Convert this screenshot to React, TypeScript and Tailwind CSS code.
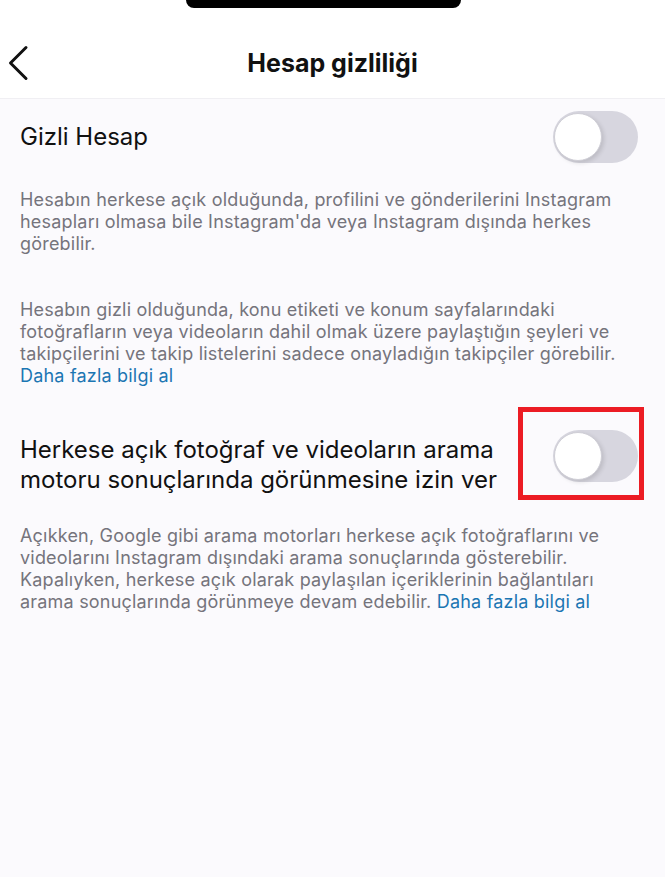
import React, { useState } from "react";

const font = { fontFamily: "Inter, 'Noto Sans', sans-serif" };

interface ToggleProps {
  on: boolean;
  onChange: () => void;
}

const Toggle: React.FC<ToggleProps> = ({ on, onChange }) => (
  <button
    onClick={onChange}
    className={`relative block h-[52px] w-[85px] shrink-0 rounded-full ${on ? "bg-[#34c759]" : "bg-[#d7d6df]"}`}
  >
    <span
      className={`absolute top-[2px] h-[48px] w-[48px] rounded-full border-[1.5px] border-[#cfced6] bg-white shadow-[2px_2px_4px_rgba(0,0,0,0.12)] ${on ? "left-[35px]" : "left-[1px]"}`}
    />
  </button>
);

const Link = () => <span className="text-[#1b76b3]">Daha fazla bilgi al</span>;

const App: React.FC = () => {
  const [isPrivate, setIsPrivate] = useState(false);
  const [searchable, setSearchable] = useState(false);

  return (
    <div className="min-h-[877px] bg-[#fbfafd] text-[#111]" style={font}>
      {/* status bar with the camera cutout */}
      <div className="flex h-[8px] bg-white">
        <div className="ml-[186px] h-[8px] w-[275px] rounded-b-[16px] bg-black" />
      </div>

      <div className="grid h-[91px] grid-cols-[60px_1fr_60px] items-start border-b border-[#f0eff3] bg-white">
        <button className="ml-[6px] mt-[37px]">
          <svg width="24" height="36" viewBox="0 0 24 36" fill="none">
            <path d="M20 2.5 L4.5 18 L20 33.5" stroke="#111" strokeWidth="3" strokeLinecap="round" strokeLinejoin="round" />
          </svg>
        </button>
        <h1 className="mt-[40px] text-center text-[25px] font-bold leading-[30px]">Hesap gizliliği</h1>
        <div />
      </div>

      <div className="pl-5 pr-[27px]">
        <div className="flex items-center justify-between pt-[12px]">
          <span className="text-[24px]">Gizli Hesap</span>
          <Toggle on={isPrivate} onChange={() => setIsPrivate(!isPrivate)} />
        </div>

        <p className="mt-[26px] text-[18px] leading-[22px] tracking-[0.2px] text-[#75747c]">
          Hesabın herkese açık olduğunda, profilini ve gönderilerini Instagram hesapları olmasa bile Instagram'da veya
          Instagram dışında herkes görebilir.
        </p>

        <p className="mt-[44px] text-[18px] leading-[22px] tracking-[0.2px] text-[#75747c]">
          Hesabın gizli olduğunda, konu etiketi ve konum sayfalarındaki fotoğrafların veya videoların dahil olmak üzere
          paylaştığın şeyleri ve takipçilerini ve takip listelerini sadece onayladığın takipçiler görebilir.
          <br />
          <Link />
        </p>

        <div className="mt-[43px] flex items-start justify-between">
          <span className="mt-[5px] text-[24px] leading-[30px]">
            Herkese açık fotoğraf ve videoların arama
            <br />
            motoru sonuçlarında görünmesine izin ver
          </span>
          <div className="relative">
            <Toggle on={searchable} onChange={() => setSearchable(!searchable)} />
            <div className="pointer-events-none absolute bottom-[-18px] left-[-35px] right-[-6px] top-[-23px] border-[5px] border-[#ec1c24]" />
          </div>
        </div>

        <p className="mt-[30px] text-[18px] leading-[22px] tracking-[0.2px] text-[#75747c]">
          Açıkken, Google gibi arama motorları herkese açık fotoğraflarını ve videolarını Instagram dışındaki arama
          sonuçlarında gösterebilir. Kapalıyken, herkese açık olarak paylaşılan içeriklerinin bağlantıları arama
          sonuçlarında görünmeye devam edebilir. <Link />
        </p>
      </div>
    </div>
  );
};

export default App;
